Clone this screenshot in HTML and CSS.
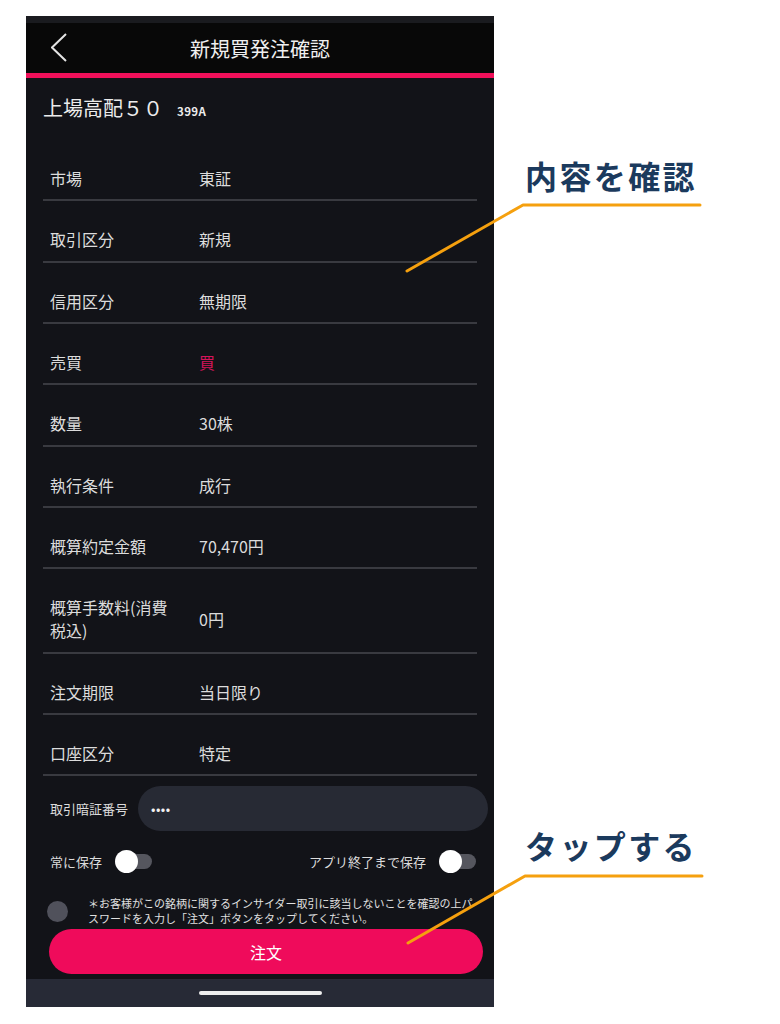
FILE: index.html
```html
<!DOCTYPE HTML>
<html>
<head>
<meta charset="utf-8">
<title>新規買発注確認</title>
<link rel="stylesheet" href="styles.css">
</head>

<body>
<div id="page">
    <div id="phone">
        <div class="header">
            <span class="back">
                <svg width="18" height="30" viewBox="0 0 18 30"><path d="M15 1 L1 14.5 L15 28" fill="none" stroke="#e4e4e4" stroke-width="2"/></svg>
            </span>
            <span class="title">新規買発注確認</span>
            <span></span>
        </div>

        <div class="stock">
            <span class="stock-name">上場高配５０</span>
            <span class="stock-code">399A</span>
        </div>

        <ul class="details">
            <li class="row"><span class="label">市場</span><span class="value">東証</span></li>
            <li class="row"><span class="label">取引区分</span><span class="value">新規</span></li>
            <li class="row"><span class="label">信用区分</span><span class="value">無期限</span></li>
            <li class="row"><span class="label">売買</span><span class="value buy">買</span></li>
            <li class="row"><span class="label">数量</span><span class="value">30株</span></li>
            <li class="row"><span class="label">執行条件</span><span class="value">成行</span></li>
            <li class="row"><span class="label">概算約定金額</span><span class="value">70,470円</span></li>
            <li class="row"><span class="label">概算手数料(消費税込)</span><span class="value">0円</span></li>
            <li class="row"><span class="label">注文期限</span><span class="value">当日限り</span></li>
            <li class="row"><span class="label">口座区分</span><span class="value">特定</span></li>
        </ul>

        <div class="pin">
            <span class="pin-label">取引暗証番号</span>
            <div class="pin-input">••••</div>
        </div>

        <div class="save">
            <span class="save-item">常に保存<span class="toggle"></span></span>
            <span class="save-item">アプリ終了まで保存<span class="toggle"></span></span>
        </div>

        <div class="notice">
            <span class="check"></span>
            <p class="notice-text">＊お客様がこの銘柄に関するインサイダー取引に該当しないことを確認の上パスワードを入力し「注文」ボタンをタップしてください。</p>
        </div>

        <button class="order">注文</button>

        <div class="home-bar"><span class="indicator"></span></div>
    </div>

    <!-- leader lines for the two callouts -->
    <svg class="leaders" width="780" height="1024" viewBox="0 0 780 1024">
        <polyline points="407,271 523,205 700,205" fill="none" stroke="#f5a00e" stroke-width="3" stroke-linecap="round" stroke-linejoin="round"/>
        <polyline points="408,943 525,876 702,876" fill="none" stroke="#f5a00e" stroke-width="3" stroke-linecap="round" stroke-linejoin="round"/>
    </svg>
    <div class="callout callout-check">内容を確認</div>
    <div class="callout callout-tap">タップする</div>
</div>
</body>
</html>
```

FILE: styles.css
```css
html, body {
    margin: 0;
    padding: 0;
    background: #fff;
}
body {
    font-family: "Noto Sans CJK JP", "Noto Sans", sans-serif;
}
#page {
    position: relative;
    width: 780px;
    height: 1024px;
    overflow: hidden;
}
#phone {
    margin: 16px 0 0 26px;
    width: 468px;
    height: 991px;
    background: #121318;
    color: #dcdcdc;
    display: flex;
    flex-direction: column;
}

/* header */
.header {
    display: grid;
    grid-template-columns: 1fr auto 1fr;
    align-items: center;
    height: 50px;
    background: #080808;
    border-top: 7px solid #1a1b1f;
    border-bottom: 5px solid #f0105a;
}
.back {
    display: flex;
    padding-left: 25px;
}
.title {
    font-size: 20px;
    color: #f0f0f0;
}

/* stock */
.stock {
    display: flex;
    align-items: baseline;
    height: 28px;
    padding: 16px 0 18px 17px;
    line-height: 28px;
}
.stock-name {
    font-size: 20px;
    color: #ececec;
}
.stock-code {
    margin-left: 14px;
    font-size: 11.5px;
    line-height: 1;
    letter-spacing: 0.4px;
    font-weight: bold;
    color: #ececec;
}

/* details */
.details {
    list-style-type: none;
    margin: 0 17px;
    padding: 0;
}
.row {
    display: flex;
    align-items: center;
    padding: 27px 0 9.33px 7px;
    line-height: 23px;
    font-size: 16px;
    border-bottom: 2px solid #393a40;
}
.label {
    width: 130px;
    margin-right: 19px;
    flex: none;
}
.buy {
    color: #d4145a;
}

/* pin */
.pin {
    display: flex;
    align-items: center;
    margin-top: 10px;
    padding: 0 6px 0 24px;
    font-size: 13px;
}
.pin-label {
    width: 88px;
    flex: none;
}
.pin-input {
    flex: 1;
    height: 45px;
    line-height: 45px;
    border-radius: 23px;
    background: #272a34;
    padding-left: 13px;
    font-size: 13px;
    letter-spacing: 0.5px;
    color: #f2f2f2;
}

/* save toggles */
.save {
    display: flex;
    justify-content: space-between;
    align-items: center;
    height: 30px;
    margin-top: 15px;
    padding: 0 18px 0 24px;
    font-size: 13px;
}
.save-item {
    display: flex;
    align-items: center;
    gap: 13px;
}
.toggle {
    position: relative;
    width: 37px;
    height: 23px;
}
.toggle::before {
    content: "";
    position: absolute;
    left: 8px;
    right: 0;
    top: 4px;
    height: 15px;
    border-radius: 8px;
    background: #55565e;
}
.toggle::after {
    content: "";
    position: absolute;
    left: 0;
    top: 0;
    width: 23px;
    height: 23px;
    border-radius: 50%;
    background: #fff;
}

/* notice */
.notice {
    display: flex;
    align-items: center;
    margin-top: 20px;
    padding-left: 21px;
}
.check {
    width: 21px;
    height: 21px;
    border-radius: 50%;
    background: #50515b;
    flex: none;
}
.notice-text {
    width: 388px;
    margin: 0 0 0 20px;
    font-size: 11px;
    line-height: 15px;
    color: #e0e0e0;
}

/* order button */
.order {
    margin: 3px 11px 0 23px;
    height: 45px;
    border: none;
    border-radius: 23px;
    background: #ef0b5b;
    color: #fff;
    font-family: "Noto Sans CJK JP", "Noto Sans", sans-serif;
    font-size: 16px;
}
.home-bar {
    margin-top: auto;
    height: 28px;
    background: #272a36;
    display: flex;
    justify-content: center;
    align-items: center;
}
.indicator {
    width: 123px;
    height: 4px;
    border-radius: 2px;
    background: #eeeeee;
}

/* callouts */
.leaders {
    position: absolute;
    left: 0;
    top: 0;
}
.callout {
    position: absolute;
    left: 525px;
    font-size: 32px;
    line-height: 32px;
    font-weight: bold;
    letter-spacing: 2.4px;
    color: #1b3a5d;
}
.callout-check {
    top: 159px;
}
.callout-tap {
    top: 829px;
}
```
